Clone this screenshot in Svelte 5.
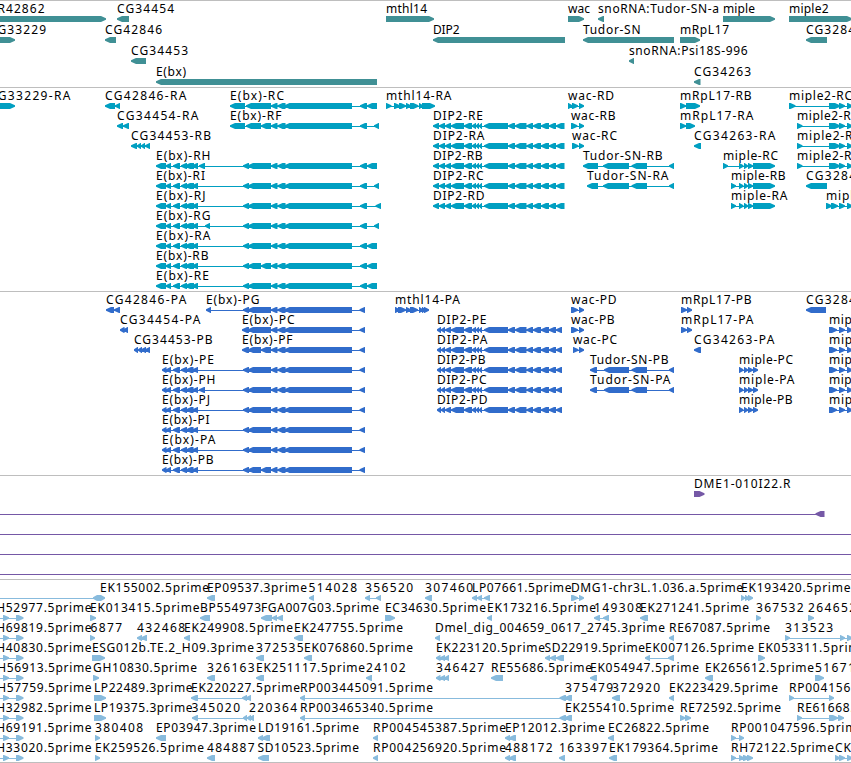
<script>
  // Feature: [row, name, text start, text end, strand, exon list]
  // Strand: '<' reverse, '>' forward, 'b' pointed on both sides, '-' plain line.
  const mid = '243-249 248-271 271-277.5 277.5-285.5 284.5-352';
  const midB = '243-249 248-261 261-271 271-277.5 277.5-285.5 284.5-352';
  const left = '156-166 165.5-171 173-180 181-187 185-194 192-198';
  const leftP = '162-166.5 166-171 173-180 181-187 186-193.5 192.5-198';
  const tail = '360-367 367-377';
  const tailP = '359.5-365';
  const dipEnd = '451-464 464-472 472-476 476-479 479-482 484-508 508-515 515-526.5 526.5-533 533-541 541-549 549-556';
  const dipR = `433-439 439-445 445-451 ${dipEnd} 556-564.5`;
  const dipP = `437-441 441-445 445-451 ${dipEnd} 556-562`;
  const mip = '739-743.5 744-748 748-753';
  const m2 = '829-840 839-845 847-853';

  const genes = [
    [0, 'CR42862', -11, 44.5, '>', '-10-106'],
    [0, 'CG34454', 117, 174, '<', '117-129'],
    [0, 'mthl14', 386, 427, '>', '386-434'],
    [0, 'wac', 568, 590, '>', '568-584'],
    [0, 'snoRNA:Tudor-SN-a', 598, 719, '<', '598-604'],
    [0, 'miple', 723, 755, '>', '723-775'],
    [0, 'miple2', 789, 828.5, '>', '789-852'],
    [1, 'CG33229', -11, 46, '>', '-10-15'],
    [1, 'CG42846', 105, 162, '<', '105-116'],
    [1, 'DIP2', 433, 459.5, '<', '433-565'],
    [1, 'Tudor-SN', 583, 640.5, '<', '583-674'],
    [1, 'mRpL17', 680, 729, '>', '680-700'],
    [1, 'CG3284', 806, 855, '<', '806-827'],
    [2, 'CG34453', 131, 188, '<', '131-146'],
    [2, 'snoRNA:Psi18S-996', 629, 747.5, '<', '629-634'],
    [3, 'E(bx)', 156, 186, '<', '156-377'],
    [3, 'CG34263', 694, 751, '<', '694-700.5']
  ];

  const transcripts = [
    [0, 'CG33229-RA', -11, 70.5, '>', '-10-15'],
    [0, 'CG42846-RA', 105, 186.5, '<', '105-115 115-120'],
    [0, 'E(bx)-RC', 230, 284, '<', `230-245 ${mid.replace('243-249 248', '246')} ${tail}`],
    [0, 'mthl14-RA', 386, 451.5, '>', '386-391.5 394-400 399-406 406-411 410-418.5 419-423 422-435'],
    [0, 'wac-RD', 568, 614, '>', '568-572.5 572-578 579-584'],
    [0, 'mRpL17-RB', 680, 751.5, '>', '680-686 686-700'],
    [0, 'miple2-RC', 789, 852, '>', `789-795.5 ${m2}`],
    [1, 'CG34454-RA', 117, 198.5, '<', '117-123 123-129'],
    [1, 'E(bx)-RF', 230, 281.5, '<', `230-245 ${midB.replace('243-249 248', '246')} 360-367 374-379`],
    [1, 'DIP2-RE', 433, 483, '<', dipR],
    [1, 'wac-RB', 571, 615.5, '>', '571-577.5 579-584'],
    [1, 'mRpL17-RA', 680, 753.5, '>', '680-686 686-695'],
    [1, 'miple2-RB', 797, 859, '>', `797-802.5 ${m2}`],
    [2, 'CG34453-RB', 131, 211, '<', '131-137 137-141 141-145 145-150'],
    [2, 'DIP2-RA', 433, 484.5, '<', dipR],
    [2, 'wac-RC', 572, 617, '>', '572-578.5 579-584'],
    [2, 'CG34263-RA', 694, 775.5, '<', '694-701'],
    [2, 'miple2-RA', 797, 861, '>', `797-802.5 ${m2}`],
    [3, 'E(bx)-RH', 156, 210.5, '<', `${left} 199-205 ${mid} ${tail}`],
    [3, 'DIP2-RB', 433, 482.5, '<', dipR],
    [3, 'Tudor-SN-RB', 583, 662.5, '<', '583-598 603-629 631.5-647 669-674'],
    [3, 'miple-RC', 723, 778, '>', `723-728 ${mip} 753-775`],
    [3, 'miple2-RD', 797, 861, '>', `797-802.5 ${m2}`],
    [4, 'E(bx)-RI', 156, 205, '<', `${left} ${mid} 360-367 374-379`],
    [4, 'DIP2-RC', 433, 483.5, '<', dipR],
    [4, 'Tudor-SN-RA', 587, 668.5, '<', '587-598 603-629 631.5-647 669-674'],
    [4, 'miple-RB', 731, 785.5, '>', `731-736 ${mip} 753-775`],
    [4, 'CG3284-RA', 806, 879, '<', '806-827'],
    [5, 'E(bx)-RJ', 156, 205.5, '<', `${left} ${mid} 360-367 375.5-381`],
    [5, 'DIP2-RD', 433, 484.5, '<', dipR],
    [5, 'miple-RA', 731, 787.5, '>', `731-736 ${mip} 753-775`],
    [5, 'miple2-RE', 826, 889, '>', '826-832 831-838 839-845 847-853'],
    [6, 'E(bx)-RG', 156, 210.5, '<', `${left} 205-210 ${mid} 360-367 374-379`],
    [7, 'E(bx)-RA', 156, 210.5, '<', `${left} ${mid} ${tail}`],
    [8, 'E(bx)-RB', 156, 208.5, '<', `${left} ${midB} ${tail}`],
    [9, 'E(bx)-RE', 156, 209, '<', `${left} ${mid} ${tail}`]
  ];

  const proteins = [
    [0, 'CG42846-PA', 106, 186.5, '<', '106-114 114-120'],
    [0, 'E(bx)-PG', 206, 259.5, '<', `206-211 ${mid} ${tailP}`],
    [0, 'mthl14-PA', 395, 460, '>', '395-400 398-406 406-411 410-418 419-423 422-425.5 424-429'],
    [0, 'wac-PD', 571, 616.5, '>', '571-578 579-584'],
    [0, 'mRpL17-PB', 681, 751.5, '>', '681-687 687-692'],
    [0, 'CG3284-PA', 806, 878, '<', '806-826'],
    [1, 'CG34454-PA', 120, 200.5, '<', '120-124.5 123.5-128'],
    [1, 'E(bx)-PC', 242, 294.5, '<', `${mid.replace('243', '242')} ${tailP}`],
    [1, 'DIP2-PE', 437, 486.5, '<', dipP],
    [1, 'wac-PB', 571, 614.5, '>', '571-578 579-584'],
    [1, 'mRpL17-PA', 681, 753.5, '>', '681-687 687-692'],
    [2, 'CG34453-PB', 134, 212.5, '<', '134-138 138-142 141-146 145-150'],
    [2, 'E(bx)-PF', 242, 292.5, '<', `${midB.replace('243', '242')} ${tailP}`],
    [2, 'DIP2-PA', 437, 487.5, '<', dipP],
    [2, 'wac-PC', 573, 617, '>', '573-578.5 579-584'],
    [2, 'CG34263-PA', 694, 774.5, '<', '694-701'],
    [3, 'E(bx)-PE', 162, 214, '<', `${leftP} ${mid} ${tailP}`],
    [3, 'DIP2-PB', 437, 485.5, '<', dipP],
    [3, 'Tudor-SN-PB', 590, 668.5, '<', '590-597 604-629 631.5-647 669-674'],
    [3, 'miple-PC', 739, 793, '>', `${mip} 753-758`],
    [4, 'E(bx)-PH', 162, 215.5, '<', `${leftP} 199-205 ${mid} ${tailP}`],
    [4, 'DIP2-PC', 437, 486.5, '<', dipP],
    [4, 'Tudor-SN-PA', 590, 670.5, '<', '590-597 604-629 631.5-647 669-674'],
    [4, 'miple-PA', 739, 794.5, '>', `${mip} 753-758`],
    [5, 'E(bx)-PJ', 162, 210, '<', `${leftP} ${mid} ${tailP}`],
    [5, 'DIP2-PD', 437, 487.5, '<', dipP],
    [5, 'miple-PB', 739, 792.5, '>', `${mip} 753-758`],
    [6, 'E(bx)-PI', 162, 209.5, '<', `${leftP} ${mid} ${tailP}`],
    [7, 'E(bx)-PA', 162, 215.5, '<', `${leftP} ${mid} ${tailP}`],
    [8, 'E(bx)-PB', 162, 213.5, '<', `${leftP} ${midB} ${tailP}`],
    ...['miple2-PB', 'miple2-PA', 'miple2-PC', 'miple2-PD', 'miple2-PE'].map((n, i) => [
      i + 1, n, 829, 891, '>', '829-837 839-845 847-853'
    ])
  ];

  const clones = [
    [0, 'DME1-010I22.R', 694, 790.5, '>', '694-704.5'],
    [1, '', 0, 0, '<', '-10--5 815.5-824.5'],
    [2, '', 0, 0, '-', '-5-860'],
    [3, '', 0, 0, '-', '-5-860'],
    [4, '', 0, 0, '-', '-5-860']
  ];

  const triple = '436-440.5 440-445 444.5-449';
  const ests = [
    [0, 'EK155002.5prime', 100, 209, 'b', '-10--5 93-105'],
    [0, 'EP09537.3prime', 207, 307, '<', '207-215'],
    [0, '514028', 308.5, 357, '<', '309-314'],
    [0, '356520', 365, 413, '<', '365-370 376-381'],
    [0, '307460', 425, 473, '<', '425-432'],
    [0, 'LP07661.5prime', 472, 571.5, '<', '472-477 477-482 484-490'],
    [0, 'DMG1-chr3L.1.036.a.5prime', 571, 743, '>', '571-578 579-584'],
    [0, 'EK193420.5prime', 741, 850.5, '>', '741-745 745-749 748-753'],
    ...['RH52977', 'RH69819', 'RH40830', 'GH56913', 'GH57759', 'RH32982', 'RH69191', 'RH33020'].map((n, i) => [
      i + 1, n + '.5prime', -12, 91.5, '>', '-8--3 3-9 16-23.5'
    ]),
    [1, 'EK013415.5prime', 90, 199.5, '>', '90-96'],
    [1, 'BP554973', 200, 261, '<', '200-210'],
    [1, 'FGA007G03.5prime', 261, 379, '<', '261-272 272-277 277-283'],
    [1, 'EC34630.5prime', 385, 486, '>', '385-395'],
    [1, 'EK173216.5prime', 487, 596, '<', '487-492'],
    [1, '149308', 594, 642, '<', '594-600 603-609'],
    [1, 'EK271241.5prime', 640, 749, '<', '640-648'],
    [1, '367532', 756, 803.5, '>', '756-761'],
    [1, '264652', 808, 856, '>', '808-814'],
    [2, '6877', 90.5, 122, '>', '90-95'],
    [2, '432468', 137, 185, '<', '137-142 141-147'],
    [2, 'EK249908.5prime', 184, 293, '<', '184-190'],
    [2, 'EK247755.5prime', 294, 403, '<', '294-303'],
    [2, 'Dmel_dig_004659_0617_2745.3prime', 435, 665, '<', '435-440'],
    [2, 'RE67087.5prime', 669, 770, '<', '669-674'],
    [2, '313523', 785, 833, '>', '785-790 840-845 847-853'],
    [3, 'ESG012b.TE.2_H09.3prime', 92, 254, '>', '92-105'],
    [3, '372535', 256, 303.5, '<', '256-264'],
    [3, 'EK076860.5prime', 304, 413, '<', '304-312'],
    [3, 'EK223120.5prime', 436, 545, '<', triple],
    [3, 'SD22919.5prime', 544.5, 645, '<', '545-550 550-556 556-564'],
    [3, 'EK007126.5prime', 645, 754, '<', '645-650 668-674'],
    [3, 'EK053311.5prime', 758, 867, '>', '758-765'],
    [4, 'GH10830.5prime', 93, 197, '>', '93-99'],
    [4, '326163', 207, 254.5, '<', '207-215'],
    [4, 'EK251117.5prime', 256, 365, '<', '256-264'],
    [4, '24102', 366, 405.5, '<', '366-372'],
    [4, '346427', 436, 484, '<', triple],
    [4, 'RE55686.5prime', 491, 592, '<', '491-503'],
    [4, 'EK054947.5prime', 590, 699, '<', '590-597'],
    [4, 'EK265612.5prime', 705, 814, '<', '705-713'],
    [4, '516712', 815, 863, '>', '815-824'],
    [5, 'LP22489.3prime', 94, 192.5, '>', '94-106'],
    [5, 'EK220227.5prime', 191, 300, '<', '191-198 242-247 246-251'],
    [5, 'RP003445091.5prime', 300, 433, '<', '300-305 559.5-566 565-572'],
    [5, '375479', 565, 613, '<', '565-572'],
    [5, '372920', 612, 660, '<', '612-620'],
    [5, 'EK223429.5prime', 669, 778, '<', '669-674'],
    [5, 'RP004156101.5prime', 789, 922, '>', '789-794 829-834'],
    [6, 'LP19375.3prime', 94, 192.5, '>', '94-106'],
    [6, '345020', 191.5, 240, '<', '192-198 243-247 247-251 250-254'],
    [6, '220364', 249, 297, '<', '250-254'],
    [6, 'RP003465340.5prime', 300, 433, '<', '300-305 559.5-566 565-572'],
    [6, 'EK255410.5prime', 565, 674, '<', '565-572'],
    [6, 'RE72592.5prime', 680, 781, '>', '680-685.5 685-691'],
    [6, 'RE61668.5prime', 797, 898, '>', '797-802 829-838 838-844'],
    [7, '380408', 95, 143, '>', '95-100'],
    [7, 'EP03947.3prime', 156, 256, '<', '156-166'],
    [7, 'LD19161.5prime', 258, 359, '<', '258-263 262-270'],
    [7, 'RP004545387.5prime', 373, 506, '<', '373-378'],
    [7, 'EP12012.3prime', 505, 605, '<', '505-510 509-516'],
    [7, 'EC26822.5prime', 608, 709, '<', '608-614'],
    [7, 'RP001047596.5prime', 731, 864, '>', '731-736 739-744'],
    [8, 'EK259526.5prime', 95, 204, '>', '95-100'],
    [8, '484887', 207, 254.5, '<', '207-215'],
    [8, 'SD10523.5prime', 257.5, 359, '<', '258-269'],
    [8, 'RP004256920.5prime', 373, 506, '<', '373-378'],
    [8, '488172', 505, 552.5, '<', '505-510 509-516'],
    [8, '163397', 559, 607, '<', '559-565'],
    [8, 'EK179364.5prime', 609, 718, '<', '609-617'],
    [8, 'RH72122.5prime', 731, 834, '>', '731-736 739-744 743-749 747-753'],
    [8, 'CK135218', 835, 898, '>', '835-840 839-845 847-853']
  ];

  const tracks = [
    { name: 'gene', color: '#409095', height: 86, pitch: 21, base: 12, bar: 15, items: genes },
    { name: 'transcript', color: '#009fc1', height: 203, pitch: 20, base: 12, bar: 15, items: transcripts },
    { name: 'protein', color: '#316ccb', height: 183, pitch: 20, base: 12, bar: 15, items: proteins },
    { name: 'clone', color: '#7558a6', height: 103, pitch: 20, base: 12, bar: 15, items: clones },
    { name: 'est', color: '#88bbdd', height: 182, pitch: 20, base: 12, bar: 15, items: ests }
  ];

  const parse = (s) =>
    s.split(' ').map((p) => {
      const m = p.match(/^(-?[\d.]+)-(-?[\d.]+)$/);
      return [+m[1], +m[2]];
    });

  // Exon block with a slightly blunt arrow tip; all outlines wind clockwise.
  function exon([a, b], dir, y) {
    const h = Math.min(dir === 'b' ? 4 : 5, b - a - 0.5);
    const l = dir === '<' || dir === 'b';
    const r = dir === '>' || dir === 'b';
    if (!l && !r) return '';
    const start = l ? `M${a} ${y + 3.7}V${y + 2.3}L${a + h} ${y}` : `M${a} ${y + 6}V${y}`;
    const end = r ? `H${b - h}L${b} ${y + 2.3}V${y + 3.7}L${b - h} ${y + 6}` : `H${b}V${y + 6}`;
    return start + end + (l ? `H${a + h}Z` : 'Z');
  }

  function shape(f, t) {
    const y = t.bar + f[0] * t.pitch;
    const list = parse(f[5]);
    const x1 = list[0][0] + 1;
    const x2 = list[list.length - 1][1] - 1;
    return `M${x1} ${y + 3}H${x2}V${y + 4}H${x1}Z` + list.map((e) => exon(e, f[4], y)).join('');
  }
</script>

<main>
  {#each tracks as t (t.name)}
    <section class="track">
      <svg width="851" height={t.height} fill={t.color}>
        {#each t.items as f}
          <path d={shape(f, t)} />
          {#if f[1]}
            <text x={f[2]} y={t.base + f[0] * t.pitch} textLength={f[3] - f[2]}>{f[1]}</text>
          {/if}
        {/each}
      </svg>
    </section>
  {/each}
</main>

<style>
  :global(body) {
    background: #fff;
  }
  main {
    display: flex;
    flex-direction: column;
    width: 851px;
    height: 763px;
    box-sizing: border-box;
    overflow: hidden;
    border-bottom: 1px solid #bebebe;
  }
  .track {
    flex: none;
    border-top: 1px solid #bebebe;
    overflow: hidden;
  }
  svg {
    display: block;
    overflow: hidden;
  }
  text {
    font-family: 'Noto Sans', 'DejaVu Sans', sans-serif;
    font-size: 12px;
    fill: #000;
    white-space: pre;
  }
</style>
